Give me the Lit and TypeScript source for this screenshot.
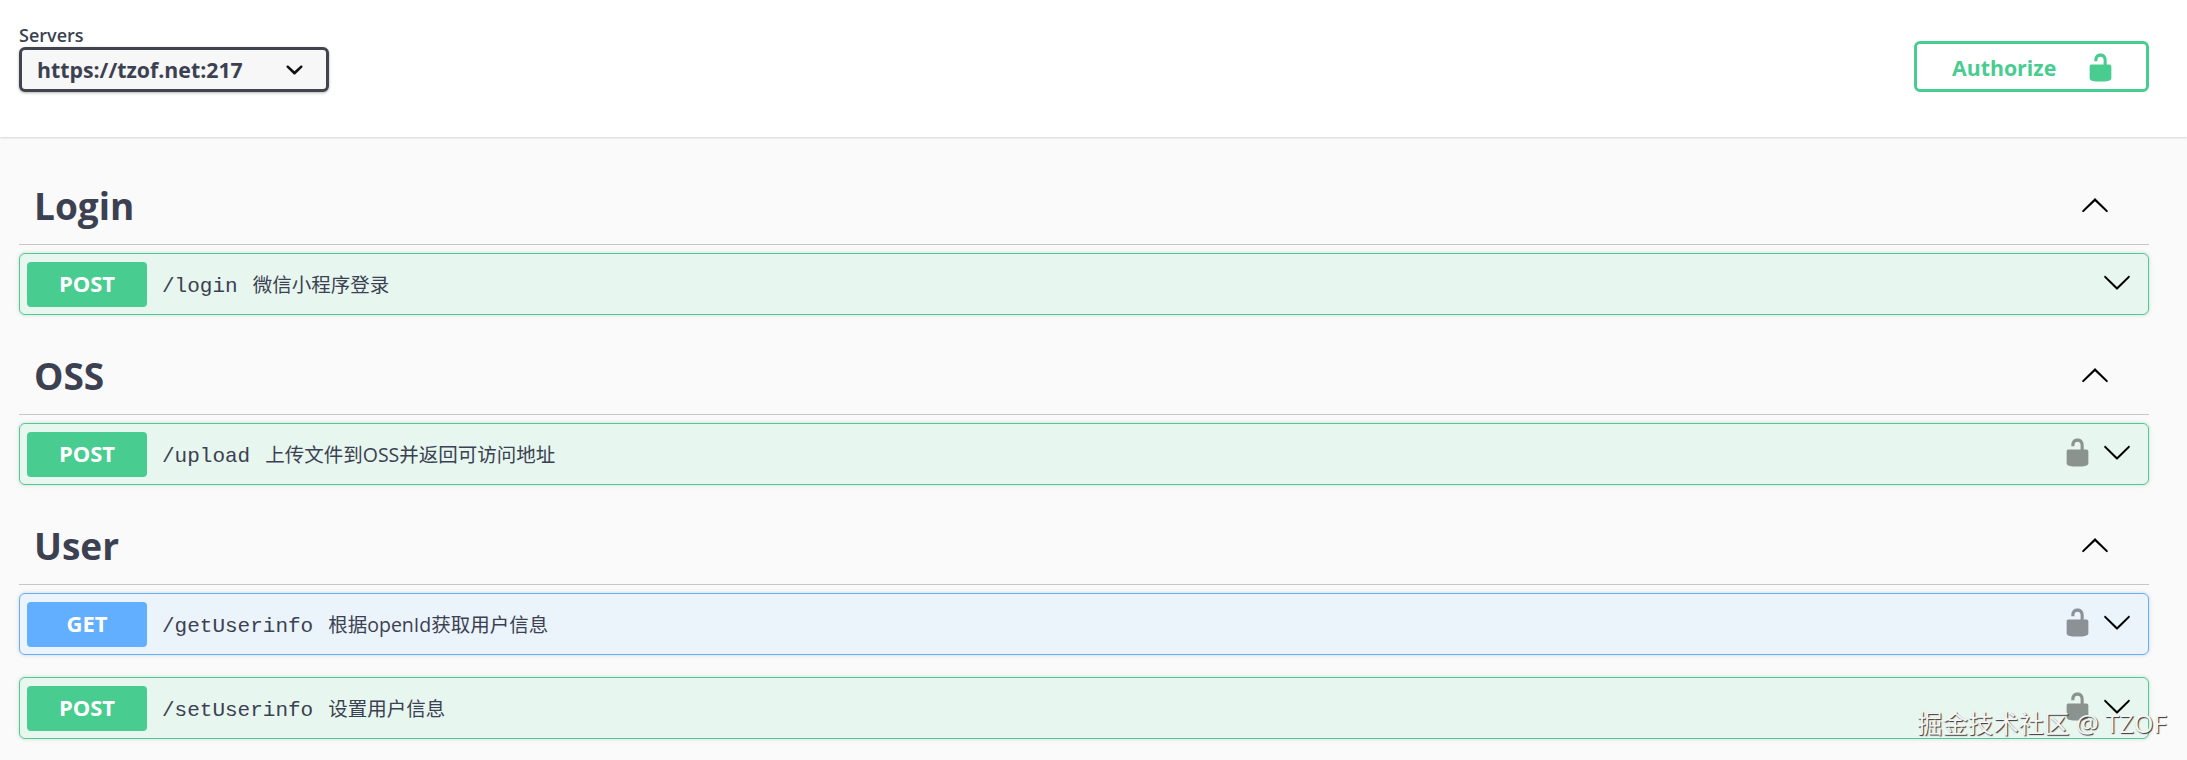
import { html, css, LitElement, svg } from 'lit';
import { customElement } from 'lit/decorators.js';

const LOCK = svg`<path d="M15.8 8H14V5.6C14 2.703 12.665 1 10 1 7.334 1 6 2.703 6 5.6V6h2v-.801C8 3.754 8.797 3 10 3c1.203 0 2 .754 2 2.199V8H4c-.553 0-1 .646-1 1.199V17c0 .549.428 1.139.951 1.307l1.197.387C5.672 18.861 6.55 19 7.1 19h5.8c.549 0 1.428-.139 1.951-.307l1.196-.387c.524-.167.953-.757.953-1.306V9.199C17 8.646 16.352 8 15.8 8z"/>`;
const ARROW = svg`<path d="M17.418 6.109c.272-.268.709-.268.979 0s.271.701 0 .969l-7.908 7.83c-.27.268-.707.268-.979 0l-7.908-7.83c-.27-.268-.27-.701 0-.969.271-.268.709-.268.979 0L10 13.25l7.418-7.141z"/>`;
const SELECT_ARROW = svg`<path d="M13.418 7.859c.271-.268.709-.268.978 0 .27.268.272.701 0 .969l-3.908 3.83c-.27.268-.707.268-.979 0l-3.908-3.83c-.27-.268-.27-.701 0-.969.271-.268.709-.268.978 0L10 11l3.418-3.141z"/>`;

interface Op {
  method: 'get' | 'post';
  path: string;
  desc: string;
  locked: boolean;
}

const SECTIONS: { name: string; ops: Op[] }[] = [
  { name: 'Login', ops: [{ method: 'post', path: '/login', desc: '微信小程序登录', locked: false }] },
  { name: 'OSS', ops: [{ method: 'post', path: '/upload', desc: '上传文件到OSS并返回可访问地址', locked: true }] },
  {
    name: 'User',
    ops: [
      { method: 'get', path: '/getUserinfo', desc: '根据openId获取用户信息', locked: true },
      { method: 'post', path: '/setUserinfo', desc: '设置用户信息', locked: true },
    ],
  },
];

@customElement('app-root')
export class AppRoot extends LitElement {
  static styles = css`
    :host {
      display: block;
      position: relative;
      height: 760px;
      overflow: hidden;
      background: #fafafa;
      color: #3b4151;
      font-family: "Open Sans", "Noto Sans CJK SC", sans-serif;
    }

    * {
      box-sizing: border-box;
    }

    .servers-bar {
      height: 137px;
      padding: 23px 38px 0 19px;
      display: flex;
      justify-content: space-between;
      align-items: flex-start;
      background: #fff;
      box-shadow: 0 1px 2px rgba(0, 0, 0, 0.15);
    }

    .servers-label {
      font-size: 18px;
      font-weight: 600;
      line-height: 24px;
    }

    .select {
      width: 310px;
      height: 45px;
      padding: 0 24px 0 15px;
      display: flex;
      align-items: center;
      justify-content: space-between;
      background: #f7f7f7;
      border: 3px solid #41444e;
      border-radius: 6px;
      box-shadow: 0 1px 3px rgba(0, 0, 0, 0.3);
      font-size: 21.3px;
      font-weight: 700;
    }

    .select svg {
      width: 35px;
      height: 35px;
      margin-right: -10px;
      fill: #111;
      flex: none;
    }

    .authorize {
      width: 235px;
      height: 51px;
      margin-top: 18px;
      padding: 2px 0 0 35px;
      display: flex;
      align-items: center;
      gap: 29px;
      border: 3px solid #49cc90;
      border-radius: 6px;
      color: #49cc90;
      font-size: 21.3px;
      font-weight: 700;
    }

    .authorize svg {
      width: 31px;
      height: 31px;
      fill: #49cc90;
      flex: none;
    }

    .content {
      padding: 8px 38px 0 19px;
    }

    .section-title {
      height: 100px;
      padding: 22px 39px 0 15px;
      display: flex;
      align-items: center;
      justify-content: space-between;
      border-bottom: 1px solid #c6c7ca;
      font-size: 37px;
      font-weight: 700;
      line-height: 1;
    }

    .section-title svg {
      width: 30px;
      height: 30px;
      flex: none;
      transform: rotate(180deg);
    }

    .ops {
      padding-top: 8px;
      display: flex;
      flex-direction: column;
      gap: 22px;
    }

    .op {
      height: 62px;
      padding: 0 16px 0 7px;
      display: flex;
      align-items: center;
      border: 1px solid;
      border-radius: 6px;
      box-shadow: 0 0 4px rgba(0, 0, 0, 0.15);
    }

    .op.post {
      background: #e7f6ef;
      border-color: #49cc90;
    }

    .op.get {
      background: #ebf3fb;
      border-color: #61affe;
    }

    .badge {
      width: 120px;
      height: 45px;
      margin-right: 15px;
      padding-bottom: 2px;
      display: flex;
      align-items: center;
      justify-content: center;
      border-radius: 4px;
      color: #fff;
      font-size: 22px;
      font-weight: 700;
      flex: none;
    }

    .post .badge {
      background: #49cc90;
    }

    .get .badge {
      background: #61affe;
    }

    .path {
      padding-top: 5px;
      font-family: "Liberation Mono", monospace;
      font-size: 21px;
      white-space: pre;
    }

    .desc {
      margin-left: 15px;
      padding-bottom: 2px;
      font-size: 19.5px;
      flex: 1;
    }

    .op-lock {
      width: 31px;
      height: 31px;
      margin: -3px 9px 0 0;
      fill: #000;
      opacity: 0.4;
      flex: none;
    }

    .op-arrow {
      width: 30px;
      height: 30px;
      flex: none;
      margin-top: -5px;
    }

    .watermark {
      position: absolute;
      left: 1917px;
      top: 705px;
      color: #f4f4f4;
      font-size: 25.4px;
      line-height: 36px;
      text-shadow: 1px 1px 1px #333;
      white-space: nowrap;
    }
  `;

  renderOp(op: Op) {
    return html`
      <div class="op ${op.method}">
        <span class="badge">${op.method.toUpperCase()}</span>
        <span class="path">${op.path}</span>
        <span class="desc">${op.desc}</span>
        ${op.locked ? html`<svg class="op-lock" viewBox="0 0 20 20">${LOCK}</svg>` : ''}
        <svg class="op-arrow" viewBox="0 0 20 20">${ARROW}</svg>
      </div>
    `;
  }

  render() {
    return html`
      <div class="servers-bar">
        <div>
          <div class="servers-label">Servers</div>
          <div class="select">
            <span>https://tzof.net:217</span>
            <svg viewBox="0 0 20 20">${SELECT_ARROW}</svg>
          </div>
        </div>
        <div class="authorize">
          <span>Authorize</span>
          <svg viewBox="0 0 20 20">${LOCK}</svg>
        </div>
      </div>
      <div class="content">
        ${SECTIONS.map(
          (s) => html`
            <section>
              <div class="section-title">
                <span>${s.name}</span>
                <svg viewBox="0 0 20 20">${ARROW}</svg>
              </div>
              <div class="ops">${s.ops.map((op) => this.renderOp(op))}</div>
            </section>
          `
        )}
      </div>
      <div class="watermark">掘金技术社区 @ TZOF</div>
    `;
  }
}
